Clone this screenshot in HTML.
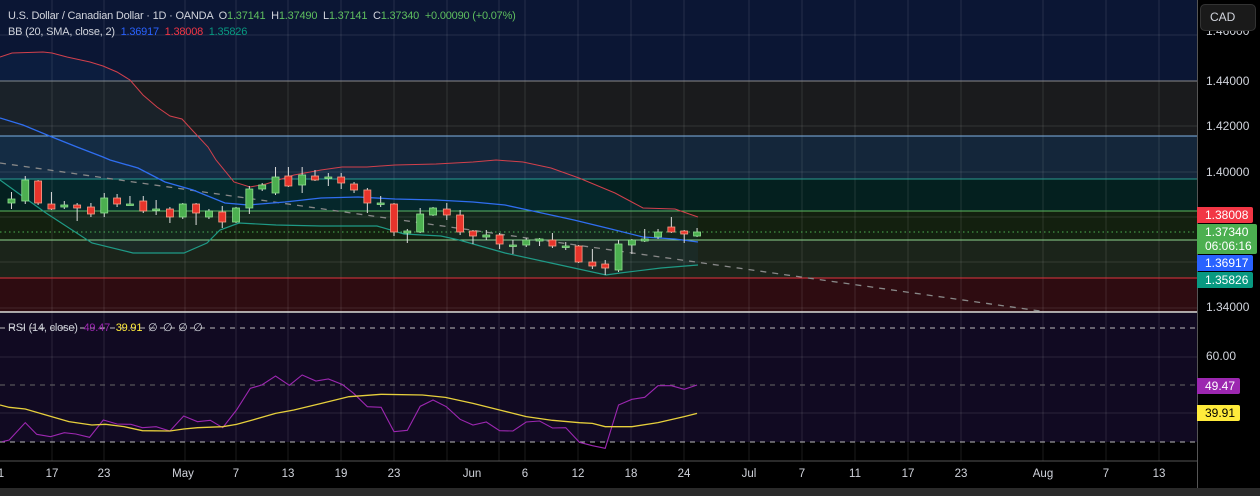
<!DOCTYPE html>
<html><head><meta charset="utf-8"><style>
*{margin:0;padding:0;box-sizing:border-box}
body{width:1260px;height:496px;background:#000;overflow:hidden;position:relative;font-family:"Liberation Sans",sans-serif}
.t{position:absolute;font-size:11px;white-space:nowrap;letter-spacing:-0.2px}
.ax{position:absolute;left:1206px;font-size:12px;color:#d1d4dc}
.lb{position:absolute;left:1197px;font-size:12px;color:#fff;padding-left:8px;border-radius:0 2px 2px 0;line-height:16px}
.tl{position:absolute;top:468px;font-size:11.5px;color:#d1d4dc;transform:translateX(-50%)}
</style></head><body>
<svg id="c" width="1197" height="488" style="position:absolute;left:0;top:0">
<rect x="0" y="0" width="1197" height="81" fill="#0b1634"/>
<rect x="0" y="81" width="1197" height="55" fill="#1a1b1d"/>
<rect x="0" y="136" width="1197" height="43" fill="#14263a"/>
<rect x="0" y="179" width="1197" height="32" fill="#04201f"/>
<rect x="0" y="211" width="1197" height="29" fill="#13200f"/>
<rect x="0" y="240" width="1197" height="38" fill="#1b241a"/>
<rect x="0" y="278" width="1197" height="34" fill="#2e0c11"/>
<rect x="0" y="313" width="1197" height="129" fill="#110a22"/>
<rect x="0" y="442" width="1197" height="19" fill="#000"/>
<g id="grid" stroke="rgba(255,255,255,0.11)" stroke-width="1"></g>
<line x1="0" y1="81" x2="1197" y2="81" stroke="#8a8a8a"/>
<line x1="0" y1="136" x2="1197" y2="136" stroke="#7fb3e6"/>
<line x1="0" y1="179" x2="1197" y2="179" stroke="#2a9d8f"/>
<line x1="0" y1="211" x2="1197" y2="211" stroke="#5cb85c"/>
<line x1="0" y1="240" x2="1197" y2="240" stroke="#8fd48f"/>
<line x1="0" y1="278" x2="1197" y2="278" stroke="#e0343f"/>
<line x1="0" y1="232" x2="1197" y2="232" stroke="#4caf50" stroke-dasharray="1.5 3"/>
<line x1="0" y1="328" x2="1197" y2="328" stroke="#bbb" stroke-dasharray="5 5"/>
<line x1="0" y1="385" x2="1197" y2="385" stroke="#666" stroke-dasharray="5 5"/>
<line x1="0" y1="442" x2="1197" y2="442" stroke="#bbb" stroke-dasharray="5 5"/>
<line x1="0" y1="312" x2="1197" y2="312" stroke="#ddd" stroke-width="1.5"/>
<line x1="0" y1="461" x2="1197" y2="461" stroke="#555"/>
<g id="dyn"></g>
</svg>
<div style="position:absolute;left:0;top:488px;width:1260px;height:8px;background:#2a2a2a"></div>
<div style="position:absolute;left:1197px;top:0;width:1px;height:488px;background:#555"></div>
<div class="t" style="left:8px;top:10px;color:#d1d4dc">U.S. Dollar / Canadian Dollar · 1D · OANDA &nbsp;O<span style="color:#5fbf5f">1.37141</span> &nbsp;H<span style="color:#5fbf5f">1.37490</span> &nbsp;L<span style="color:#5fbf5f">1.37141</span> &nbsp;C<span style="color:#5fbf5f">1.37340</span> &nbsp;<span style="color:#5fbf5f">+0.00090 (+0.07%)</span></div>
<div class="t" style="left:8px;top:26px;color:#d1d4dc">BB (20, SMA, close, 2) &nbsp;<span style="color:#2962ff">1.36917</span> &nbsp;<span style="color:#f23645">1.38008</span> &nbsp;<span style="color:#089981">1.35826</span></div>
<div class="t" style="left:8px;top:321px;color:#d1d4dc">RSI (14, close) &nbsp;<span style="color:#9c27b0">49.47</span> &nbsp;<span style="color:#ffeb3b">39.91</span> &nbsp;∅ &nbsp;∅ &nbsp;∅ &nbsp;∅</div>
<div class="ax" style="top:24px">1.46000</div>
<div style="position:absolute;left:1200px;top:4px;width:56px;height:27px;background:#1a1a1a;border:1px solid #333;border-radius:5px;color:#d1d4dc;font-size:12px;line-height:25px;padding-left:9px">CAD</div>
<div class="ax" style="top:74px">1.44000</div>
<div class="ax" style="top:119px">1.42000</div>
<div class="ax" style="top:165px">1.40000</div>
<div class="ax" style="top:300px">1.34000</div>
<div class="lb" style="top:207px;width:56px;background:#f23645">1.38008</div>
<div class="lb" style="top:224px;width:60px;background:#4caf50;line-height:14px;padding-top:1px;height:30px">1.37340<br>06:06:16</div>
<div class="lb" style="top:255px;width:56px;background:#2962ff">1.36917</div>
<div class="lb" style="top:272px;width:56px;background:#089981">1.35826</div>
<div class="ax" style="top:349px">60.00</div>
<div class="lb" style="top:378px;width:43px;background:#9c27b0">49.47</div>
<div class="lb" style="top:405px;width:43px;background:#ffeb3b;color:#000">39.91</div>
<div class="tl" style="left:1px">1</div>
<div class="tl" style="left:52px">17</div>
<div class="tl" style="left:104px">23</div>
<div class="tl" style="left:183px">May</div>
<div class="tl" style="left:236px">7</div>
<div class="tl" style="left:288px">13</div>
<div class="tl" style="left:341px">19</div>
<div class="tl" style="left:394px">23</div>
<div class="tl" style="left:472px">Jun</div>
<div class="tl" style="left:525px">6</div>
<div class="tl" style="left:578px">12</div>
<div class="tl" style="left:631px">18</div>
<div class="tl" style="left:684px">24</div>
<div class="tl" style="left:749px">Jul</div>
<div class="tl" style="left:802px">7</div>
<div class="tl" style="left:855px">11</div>
<div class="tl" style="left:908px">17</div>
<div class="tl" style="left:961px">23</div>
<div class="tl" style="left:1043px">Aug</div>
<div class="tl" style="left:1106px">7</div>
<div class="tl" style="left:1159px">13</div>
<script>
var NS="http://www.w3.org/2000/svg";
function el(p,t,a){var e=document.createElementNS(NS,t);for(var k in a)e.setAttribute(k,a[k]);p.appendChild(e);return e;}
var g=document.getElementById('grid');
[52,104,185,236,288,341,394,447,499,525,578,631,684,749,802,855,908,961,1043,1106,1159].forEach(function(x){el(g,'line',{x1:x,y1:0,x2:x,y2:461});});
[35,126,172,217,262,308,357,413].forEach(function(y){el(g,'line',{x1:0,y1:y,x2:1197,y2:y});});
var d=document.getElementById('dyn');
function pl(pts,col,w,extra){var a={points:pts.map(function(p){return p[0]+','+p[1]}).join(' '),fill:'none',stroke:col,'stroke-width':w||1};for(var k in extra)a[k]=extra[k];el(d,'polyline',a);}
var red=[[0,57],[12,53],[43,52],[52,53],[67,57],[90,62],[103,66],[117,72],[130,80],[143,95],[157,107],[170,116],[182,119],[193,131],[208,147],[216,160],[234,182],[250,187],[266,184],[294,175],[321,170],[342,167],[367,167],[395,165],[436,164],[473,162],[496,160],[523,162],[551,168],[579,178],[615,193],[643,208],[675,209],[698,217]];
var blue=[[0,118],[23,125],[52,137],[77,147],[103,157],[110,160],[138,168],[165,182],[193,190],[225,203],[248,205],[285,202],[321,198],[358,197],[395,199],[436,200],[473,202],[505,205],[528,210],[574,220],[611,229],[643,237],[675,239],[698,242]];
var teal=[[0,180],[18,193],[46,213],[92,243],[133,253],[184,253],[207,243],[220,230],[239,223],[276,225],[321,226],[377,226],[404,234],[441,236],[459,240],[505,253],[551,263],[606,275],[620,273],[661,268],[698,265]];
el(d,'polygon',{points:red.concat(teal.slice().reverse()).map(function(p){return p[0]+','+p[1]}).join(' '),fill:'rgba(33,150,243,0.06)'});
el(d,'line',{x1:0,y1:163,x2:1040,y2:311,stroke:'#888','stroke-dasharray':'6 6','stroke-width':1.3});
pl(red,'#d2404c',1);pl(blue,'#2f6ef0',1.3);pl(teal,'#1f9a86',1.2);
var C=[[25,199,203,192,209,1],[55,180,201,176,204,1],[83,181,203,180,205,0],[112,204,209,192,210,0],[140,205,207,201,209,1],[168,205,208,203,221,0],[198,207,214,203,217,0],[227,198,213,193,217,1],[255,198,204,194,207,0],[283,204,205,196,205,1],[312,201,211,196,213,0],[340,209,210,200,215,1],[370,209,217,207,223,0],[398,204,217,203,219,1],[427,204,213,203,225,0],[455,211,217,209,219,1],[484,212,222,206,228,0],[514,208,222,207,223,1],[543,189,208,186,214,1],[571,185,189,183,191,1],[600,177,193,167,195,1],[628,176,186,167,187,0],[658,175,185,167,193,1],[686,176,180,170,181,0],[715,177,178,173,186,1],[743,177,183,173,189,0],[771,184,190,182,193,0],[800,190,203,188,213,0],[829,203,204,196,207,1],[858,204,232,203,236,0],[887,231,233,229,243,1],[915,214,232,208,233,1],[943,208,215,207,216,1],[973,209,215,203,220,0],[1002,215,232,210,235,0],[1030,231,236,230,244,0],[1059,235,237,230,240,1],[1088,235,244,233,249,0],[1117,245,246,240,254,1],[1146,240,245,238,247,1],[1175,239,241,238,246,1],[1203,240,246,233,248,0],[1232,246,247,242,250,1],[1260,246,262,245,263,0],[1290,262,266,249,269,0],[1318,264,268,260,275,0],[1347,244,270,240,272,1],[1376,240,245,239,254,1],[1404,239,241,229,242,1],[1433,232,237,229,239,1],[1462,227,232,217,233,0],[1490,231,234,230,243,0],[1518,232,236,228,237,1]];
C.forEach(function(c){var x=c[0]*0.4592;var up=c[5];var fill=up?'#4caf50':'#e8342b';var brd=up?'#8fe08f':'#f4a08a';
el(d,'line',{x1:x,y1:c[3],x2:x,y2:c[4],stroke:'#ddd','stroke-width':1});
el(d,'rect',{x:x-3.5,y:c[1],width:7,height:Math.max(1.5,c[2]-c[1]),fill:fill,stroke:brd,'stroke-width':0.8});});
var P=[[5,470],[20,465],[55,413],[80,448],[110,455],[140,443],[165,447],[195,457],[225,405],[255,417],[285,418],[310,428],[340,425],[370,438],[400,393],[430,410],[458,406],[485,428],[515,375],[545,310],[570,300],[600,273],[630,301],[658,270],[688,288],[715,282],[745,298],[770,325],[800,365],[830,367],[858,440],[887,436],[915,364],[943,345],[972,365],[1002,403],[1030,420],[1059,411],[1088,437],[1117,438],[1146,411],[1175,408],[1203,429],[1232,428],[1262,472],[1290,482],[1318,490],[1347,360],[1376,343],[1404,337],[1433,302],[1462,302],[1490,313],[1518,300]];
var Y=[[0,360],[20,367],[55,372],[100,390],[150,410],[200,420],[230,418],[270,425],[310,437],[370,438],[400,432],[430,428],[485,425],[515,418],[550,405],[600,385],[640,375],[700,355],[760,335],[830,328],[920,330],[970,337],[1030,355],[1088,375],[1146,395],[1203,406],[1262,413],[1290,415],[1318,425],[1376,425],[1433,413],[1490,395],[1518,385]];
function cv(a){return a.map(function(p){return [p[0]*0.4592,285+p[1]/3]});}
pl(cv(P),'#9c27b0',1.1);pl(cv(Y),'#e6cf3c',1.3);
</script>
</body></html>
